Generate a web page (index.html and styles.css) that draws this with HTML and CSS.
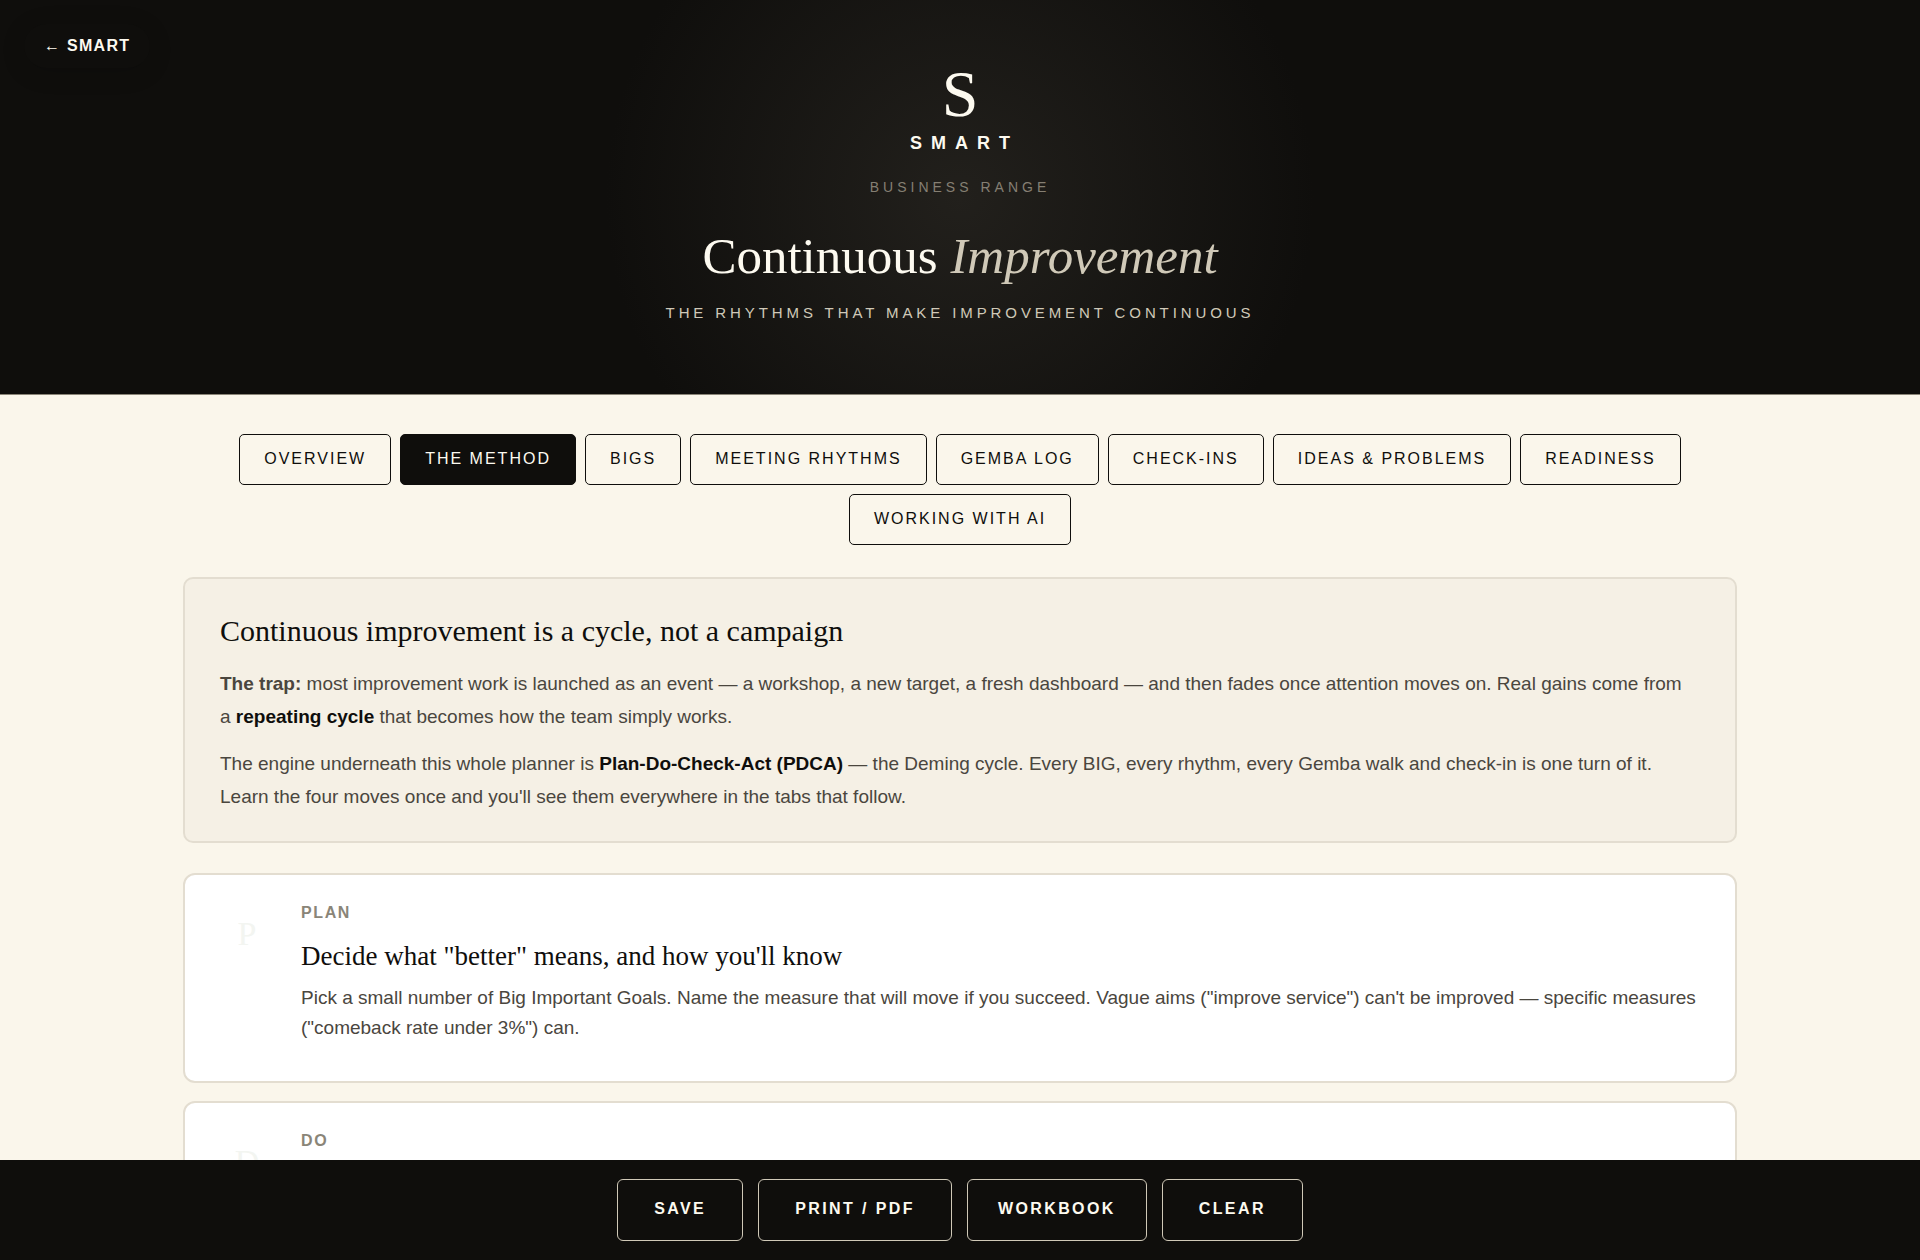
FILE: index.html
```html
<!DOCTYPE html>
<html lang="en">
<head>
    <meta charset="UTF-8">
    <meta name="viewport" content="width=device-width, initial-scale=1.0">
    <title>Continuous Improvement | SMART</title>
    <link rel="stylesheet" href="styles.css">
</head>
<body>
    <a class="back-link" href="#">← SMART</a>

    <header class="header">
        <div class="logo-mark">S</div>
        <div class="logo-name">SMART</div>
        <div class="range">Business Range</div>
        <h1>Continuous <em>Improvement</em></h1>
        <p class="tagline">The rhythms that make improvement continuous</p>
    </header>

    <nav class="tabs">
        <button class="tab">Overview</button>
        <button class="tab active">The Method</button>
        <button class="tab">BIGs</button>
        <button class="tab">Meeting Rhythms</button>
        <button class="tab">Gemba Log</button>
        <button class="tab">Check-ins</button>
        <button class="tab">Ideas &amp; Problems</button>
        <button class="tab">Readiness</button>
        <button class="tab">Working with AI</button>
    </nav>

    <main class="content">
        <section class="intro">
            <h2>Continuous improvement is a cycle, not a campaign</h2>
            <p><b>The trap:</b> most improvement work is launched as an event — a workshop, a new target, a fresh dashboard — and then fades once attention moves on. Real gains come from a&nbsp;<strong>repeating cycle</strong> that becomes how the team simply works.</p>
            <p>The engine underneath this whole planner is <strong>Plan-Do-Check-Act (PDCA)</strong> — the Deming cycle. Every BIG, every rhythm, every Gemba walk and check-in is one turn of it. Learn the four moves once and you'll see them everywhere in the tabs that follow.</p>
        </section>

        <article class="step">
            <div class="step-letter">P</div>
            <div class="step-body">
                <div class="step-label">Plan</div>
                <h3>Decide what "better" means, and how you'll know</h3>
                <p>Pick a small number of Big Important Goals. Name the measure that will move if you succeed. Vague aims ("improve service") can't be improved — specific measures ("comeback rate under 3%") can.</p>
            </div>
        </article>

        <article class="step">
            <div class="step-letter">D</div>
            <div class="step-body">
                <div class="step-label">Do</div>
            </div>
        </article>
    </main>

    <footer class="actions">
        <button class="action">Save</button>
        <button class="action">Print / PDF</button>
        <button class="action workbook">Workbook</button>
        <button class="action">Clear</button>
    </footer>
</body>
</html>
```

FILE: styles.css
```css
* {
    box-sizing: border-box;
    margin: 0;
    padding: 0;
}
body {
    background: #faf6eb;
    color: #0f0e0c;
    font-family: "Liberation Sans", Arial, sans-serif;
    padding-bottom: 100px;
}

/* Header */
.back-link {
    position: absolute;
    top: 24px;
    left: 24px;
    padding: 10px 20px;
    border-radius: 24px;
    background: #0f0e0c;
    box-shadow: 0 4px 24px rgba(0, 0, 0, 0.15);
    color: #fdfaf0;
    font-size: 16px;
    font-weight: bold;
    line-height: 24px;
    letter-spacing: 0.08em;
    text-decoration: none;
}
.header {
    padding: 61px 24px 69px;
    background: radial-gradient(circle at 50% 50%, #22201c 0, #0f0e0c 354px);
    border-bottom: 1px solid #8a8578;
    color: #fdfaf0;
    text-align: center;
}
.logo-mark {
    font-family: "Liberation Serif", "Times New Roman", serif;
    font-size: 66px;
    line-height: 66px;
}
.logo-name {
    margin-top: 5px;
    font-size: 18px;
    font-weight: bold;
    line-height: 22px;
    letter-spacing: 0.5em;
    text-indent: 0.5em;
}
.range {
    margin-top: 22px;
    color: #857f73;
    font-size: 14px;
    line-height: 22px;
    letter-spacing: 4px;
    text-transform: uppercase;
}
.header h1 {
    margin-top: 27px;
    font-family: "Liberation Serif", "Times New Roman", serif;
    font-size: 51px;
    font-weight: normal;
    line-height: 62px;
}
.header em {
    color: #d0c9b8;
}
.tagline {
    margin-top: 14px;
    color: #d0c9b8;
    font-size: 15px;
    line-height: 24px;
    letter-spacing: 0.26em;
    text-transform: uppercase;
}

/* Tabs */
.tabs {
    display: flex;
    flex-wrap: wrap;
    justify-content: center;
    gap: 9px;
    padding: 39px 184px 32px;
}
.tab {
    height: 51px;
    padding: 0 24px 2px;
    border: 1px solid #0f0e0c;
    border-radius: 5px;
    background: transparent;
    color: #0f0e0c;
    font-family: inherit;
    font-size: 16px;
    letter-spacing: 2px;
    text-transform: uppercase;
    cursor: pointer;
}
.tab.active {
    background: #0f0e0c;
    color: #fdfaf0;
}

/* Content */
.content {
    display: flex;
    flex-direction: column;
    margin: 0 183px;
}
.intro {
    padding: 34px 35px 28px;
    border: 2px solid #e3ddd0;
    border-radius: 10px;
    background: #f5f0e5;
    color: #4a463e;
}
.intro h2 {
    color: #0f0e0c;
    font-family: "Liberation Serif", "Times New Roman", serif;
    font-size: 30px;
    font-weight: normal;
    line-height: 36px;
}
.intro p {
    margin-top: 14px;
    font-size: 19px;
    line-height: 33px;
}
.intro h2 + p {
    margin-top: 18px;
}
.intro strong {
    color: #0f0e0c;
}
.step {
    display: flex;
    gap: 28px;
    min-height: 210px;
    padding: 27px 36px;
    border: 2px solid #e3ddd0;
    border-radius: 12px;
    background: #fff;
}
.intro + .step {
    margin-top: 30px;
}
.step + .step {
    margin-top: 18px;
}
.step-letter {
    flex: none;
    width: 52px;
    padding-top: 12px;
    color: #f3f5f1;
    font-family: "Liberation Serif", "Times New Roman", serif;
    font-size: 34px;
    line-height: 40px;
    text-align: center;
}
.step-label {
    color: #8a8578;
    font-size: 16px;
    font-weight: bold;
    line-height: 22px;
    letter-spacing: 0.1em;
    text-transform: uppercase;
}
.step h3 {
    margin-top: 15px;
    font-family: "Liberation Serif", "Times New Roman", serif;
    font-size: 27px;
    font-weight: normal;
    line-height: 34px;
}
.step p {
    margin-top: 10px;
    color: #4a463e;
    font-size: 19px;
    line-height: 30px;
}

/* Bottom bar */
.actions {
    position: fixed;
    right: 0;
    bottom: 0;
    left: 0;
    display: flex;
    justify-content: center;
    gap: 15px;
    padding: 19px;
    background: #0f0e0c;
}
.action {
    height: 62px;
    padding: 0 36px 2px;
    border: 1px solid #d0c9b8;
    border-radius: 6px;
    background: transparent;
    color: #fdfaf0;
    font-family: inherit;
    font-size: 16px;
    font-weight: bold;
    letter-spacing: 0.15em;
    text-transform: uppercase;
    cursor: pointer;
}
.action.workbook {
    padding: 0 30px 2px;
}
```
